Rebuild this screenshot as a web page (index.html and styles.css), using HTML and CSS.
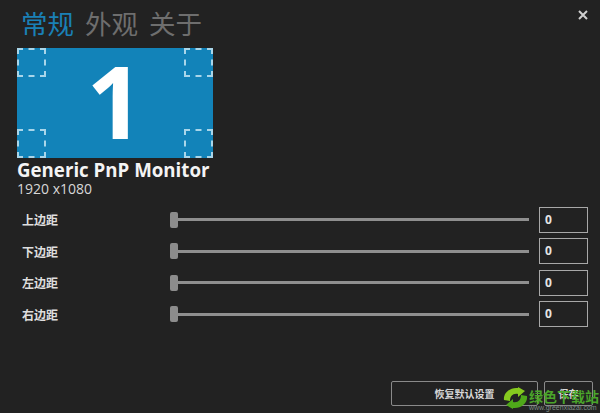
FILE: index.html
```html
<!DOCTYPE html>
<html lang="zh-CN">
<head>
    <meta charset="UTF-8">
    <title>常规</title>
    <link rel="stylesheet" href="styles.css">
</head>
<body>
    <div class="window">
        <div class="tabs">
            <span class="tab active">常规</span>
            <span class="tab">外观</span>
            <span class="tab">关于</span>
        </div>
        <button class="close" type="button">
            <svg width="10" height="10" viewBox="0 0 10 10"><path d="M1 1L9 9M9 1L1 9" stroke="#cfcfcf" stroke-width="2"/></svg>
        </button>

        <div class="monitor">
            <div class="corners">
                <span class="corner"></span>
                <span class="corner"></span>
            </div>
            <span class="number">1</span>
            <div class="corners">
                <span class="corner"></span>
                <span class="corner"></span>
            </div>
        </div>
        <div class="monitor-name">Generic PnP Monitor</div>
        <div class="monitor-size">1920 x1080</div>

        <div class="margins">
            <div class="row">
                <label class="row-label">上边距</label>
                <div class="slider"><span class="thumb"></span><span class="track"></span></div>
                <div class="value">0</div>
            </div>
            <div class="row">
                <label class="row-label">下边距</label>
                <div class="slider"><span class="thumb"></span><span class="track"></span></div>
                <div class="value">0</div>
            </div>
            <div class="row">
                <label class="row-label">左边距</label>
                <div class="slider"><span class="thumb"></span><span class="track"></span></div>
                <div class="value">0</div>
            </div>
            <div class="row">
                <label class="row-label">右边距</label>
                <div class="slider"><span class="thumb"></span><span class="track"></span></div>
                <div class="value">0</div>
            </div>
        </div>

        <div class="actions">
            <button class="btn btn-reset" type="button">恢复默认设置</button>
            <button class="btn btn-save" type="button">保存</button>
        </div>

        <div class="watermark">
            <svg class="watermark-logo" width="25" height="22" viewBox="0 0 25 22">
                <path d="M1 13C0 6 7 0 15 1L15 0L22 4L15 10L15 7C10 6 7 9 7 14Z" fill="#86c91f"/>
                <path d="M24 9C25 16 18 22 10 21L10 22L3 18L10 12L10 15C15 16 18 13 18 8Z" fill="#4fa81a"/>
            </svg>
            <div class="watermark-text">
                <span class="watermark-name">绿色下载站</span>
                <span class="watermark-url">www.greenxiazai.com</span>
            </div>
        </div>
    </div>
</body>
</html>
```

FILE: styles.css
```css
html, body {
    margin: 0;
    padding: 0;
    background-color: #222222;
}
.window {
    position: relative;
    width: 600px;
    height: 413px;
    overflow: hidden;
    box-sizing: border-box;
    padding: 5px 12px 0 17px;
    background-color: #222222;
    color: #fff;
    font-family: "Open Sans", "Noto Sans CJK SC", sans-serif;
}
.tabs {
    display: flex;
    gap: 11px;
    padding-left: 4px;
    height: 43px;
}
.tab {
    font-family: "Noto Sans CJK SC", sans-serif;
    font-size: 26.5px;
    line-height: 36px;
    font-weight: 400;
    color: #6e6e6e;
}
.tab.active {
    color: #1a80b6;
}
.close {
    position: absolute;
    top: 10px;
    right: 12px;
    width: 10px;
    height: 10px;
    padding: 0;
    border: none;
    background: none;
    display: flex;
}
.monitor {
    width: 196px;
    height: 110px;
    box-sizing: border-box;
    background-color: #1283b9;
    display: flex;
    flex-direction: column;
    justify-content: space-between;
    position: relative;
}
.corners {
    display: flex;
    justify-content: space-between;
}
.corner {
    width: 29px;
    height: 29px;
    box-sizing: border-box;
    border: 2px dashed #a9d6ea;
}
.number {
    position: absolute;
    left: 0;
    right: 0;
    top: 0;
    text-align: center;
    font-family: "Open Sans", sans-serif;
    font-weight: 700;
    font-size: 100px;
    line-height: 104px;
    color: #fff;
}
.monitor-name {
    margin-top: 2px;
    font-size: 18.7px;
    line-height: 20px;
    font-weight: 700;
    color: #f4f4f4;
    white-space: nowrap;
}
.monitor-size {
    font-size: 14px;
    line-height: 18px;
    color: #d8d8d8;
}
.margins {
    margin-top: 7px;
    display: flex;
    flex-direction: column;
    gap: 2.6px;
}
.row {
    display: flex;
    align-items: center;
    height: 29px;
}
.row-label {
    width: 153px;
    padding-left: 5px;
    box-sizing: border-box;
    font-family: "Noto Sans CJK SC", sans-serif;
    font-size: 12px;
    font-weight: 700;
    color: #dedede;
}
.slider {
    width: 359px;
    margin-right: 10px;
    display: flex;
    align-items: center;
}
.thumb {
    width: 8px;
    height: 16px;
    border-radius: 2px;
    background-color: #8c8c8c;
    flex-shrink: 0;
}
.track {
    flex: 1;
    height: 3px;
    background-color: #8f8f8f;
}
.value {
    width: 49px;
    height: 26px;
    box-sizing: border-box;
    border: 1px solid #a8a8a8;
    padding-left: 5px;
    font-family: "Open Sans", sans-serif;
    font-size: 12px;
    font-weight: 700;
    line-height: 24px;
    color: #e4e4e4;
}
.actions {
    position: absolute;
    left: 391px;
    top: 381px;
    display: flex;
    gap: 6px;
}
.btn {
    height: 25px;
    box-sizing: border-box;
    padding: 0;
    border: 1px solid #8a8a8a;
    border-radius: 2px;
    background: none;
    color: #d8d8d8;
    font-family: "Noto Sans CJK SC", sans-serif;
    font-size: 10px;
    font-weight: 700;
}
.btn-reset {
    width: 147px;
}
.btn-save {
    width: 49px;
}
.watermark {
    position: absolute;
    left: 503px;
    top: 387px;
    display: flex;
    gap: 1px;
}
.watermark-text {
    display: flex;
    flex-direction: column;
    padding-top: 1px;
}
.watermark-name {
    font-family: "Noto Sans CJK SC", sans-serif;
    font-size: 14px;
    line-height: 16px;
    font-weight: 700;
    color: #4aa52a;
    white-space: nowrap;
}
.watermark-url {
    font-family: "Liberation Sans", sans-serif;
    font-size: 7px;
    line-height: 8px;
    color: #7f8d86;
    white-space: nowrap;
}
```
